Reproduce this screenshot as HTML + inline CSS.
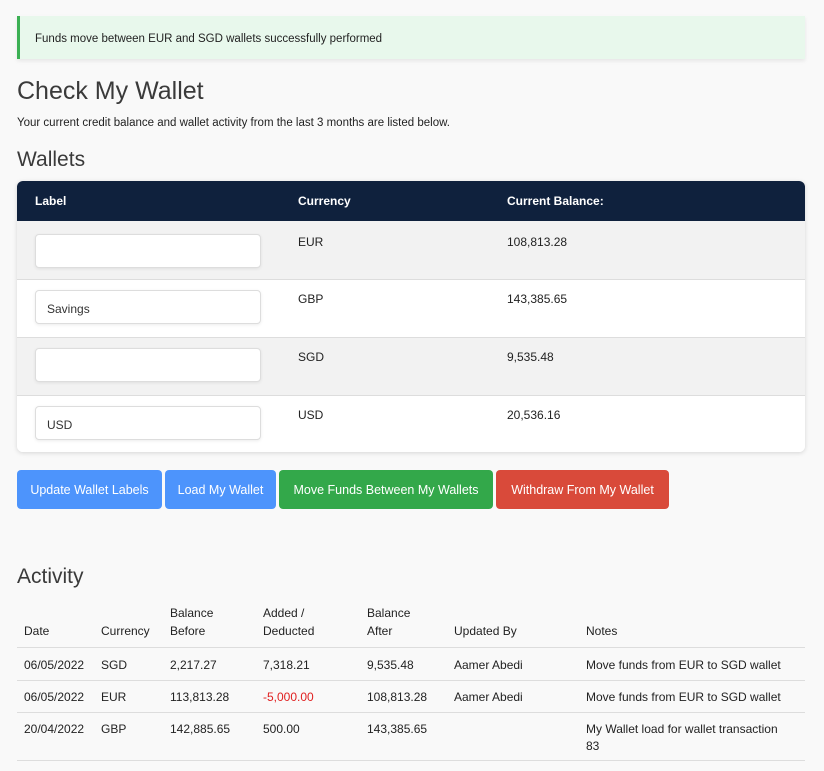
<!DOCTYPE html>
<html><head><meta charset="utf-8"><style>
*{margin:0;padding:0;box-sizing:border-box}
body{width:824px;height:771px;background:#f9f9f9;font-family:"Liberation Sans",sans-serif;color:#222;position:relative;overflow:hidden}
.a{position:absolute;white-space:nowrap}
.alert{left:17px;top:16px;width:788px;height:43px;background:#e8f8ec;border-left:3px solid #3cb054;box-shadow:0 2px 4px rgba(0,0,0,.08)}
.t{font-size:12px;margin-top:1px}
.s{font-size:11.5px}
.h{font-weight:300;color:#3a3a3a}
.card{left:17px;top:181px;width:788px;height:271px;border-radius:6px;overflow:hidden;box-shadow:0 1px 5px rgba(0,0,0,.15);background:#fff}
.thead{position:absolute;left:0;top:0;width:788px;height:40px;background:#0f213d}
.row{position:absolute;left:0;width:788px;border-top:1px solid #ddd}
.inp{position:absolute;left:18px;width:226px;height:34px;background:#fff;border:1px solid #ddd;border-radius:4px;box-shadow:0 1px 3px rgba(0,0,0,.08);font-size:12px;padding:11px 11px;color:#333}
.btn{top:470px;height:39px;border-radius:4px;color:#fff;font-size:12.5px;text-align:center;line-height:40px}
.line{position:absolute;left:17px;width:788px;height:1px;background:#ddd}
</style></head><body>
<div class="a alert"></div>
<div class="a t" style="left:35px;top:32px;font-size:11.5px">Funds move between EUR and SGD wallets successfully performed</div>
<div class="a h" style="left:17px;top:77px;font-size:25px">Check My Wallet</div>
<div class="a s" style="left:17px;top:117px">Your current credit balance and wallet activity from the last 3 months are listed below.</div>
<div class="a h" style="left:17px;top:148px;font-size:21px">Wallets</div>
<div class="a card">
<div class="thead"></div>
<div class="a t" style="left:18px;top:12px;color:#fff;font-weight:bold">Label</div>
<div class="a t" style="left:281px;top:12px;color:#fff;font-weight:bold">Currency</div>
<div class="a t" style="left:490px;top:12px;color:#fff;font-weight:bold">Current Balance:</div>
<div class="row" style="top:40px;height:58px;background:#f2f2f2;border-top:none"></div>
<div class="row" style="top:98px;height:58px;background:#fff"></div>
<div class="row" style="top:156px;height:58px;background:#f2f2f2"></div>
<div class="row" style="top:214px;height:57px;background:#fff"></div>
<div class="inp" style="top:53px"></div>
<div class="inp" style="top:109px">Savings</div>
<div class="inp" style="top:167px"></div>
<div class="inp" style="top:225px">USD</div>
<div class="a t" style="left:281px;top:53px">EUR</div><div class="a t" style="left:490px;top:53px">108,813.28</div>
<div class="a t" style="left:281px;top:110px">GBP</div><div class="a t" style="left:490px;top:110px">143,385.65</div>
<div class="a t" style="left:281px;top:168px">SGD</div><div class="a t" style="left:490px;top:168px">9,535.48</div>
<div class="a t" style="left:281px;top:226px">USD</div><div class="a t" style="left:490px;top:226px">20,536.16</div>
</div>
<div class="a btn" style="left:17px;width:145px;background:#4d94fc">Update Wallet Labels</div>
<div class="a btn" style="left:165px;width:111px;background:#4d94fc">Load My Wallet</div>
<div class="a btn" style="left:279px;width:214px;background:#33a84a">Move Funds Between My Wallets</div>
<div class="a btn" style="left:496px;width:173px;background:#d94a3a">Withdraw From My Wallet</div>
<div class="a h" style="left:17px;top:565px;font-size:21px">Activity</div>
<div class="a t" style="left:170px;top:605px">Balance</div>
<div class="a t" style="left:263px;top:605px">Added /</div>
<div class="a t" style="left:367px;top:605px">Balance</div>
<div class="a t" style="left:24px;top:623px">Date</div>
<div class="a t" style="left:101px;top:623px">Currency</div>
<div class="a t" style="left:170px;top:623px">Before</div>
<div class="a t" style="left:263px;top:623px">Deducted</div>
<div class="a t" style="left:367px;top:623px">After</div>
<div class="a t" style="left:454px;top:623px">Updated By</div>
<div class="a t" style="left:586px;top:623px">Notes</div>
<div class="line" style="top:647px"></div>
<div class="line" style="top:680px"></div>
<div class="line" style="top:712px"></div>
<div class="line" style="top:760px"></div>
<div class="a t" style="left:24px;top:657px">06/05/2022</div><div class="a t" style="left:101px;top:657px">SGD</div><div class="a t" style="left:170px;top:657px">2,217.27</div><div class="a t" style="left:263px;top:657px">7,318.21</div><div class="a t" style="left:367px;top:657px">9,535.48</div><div class="a t" style="left:454px;top:657px">Aamer Abedi</div><div class="a t" style="left:586px;top:657px">Move funds from EUR to SGD wallet</div>
<div class="a t" style="left:24px;top:689px">06/05/2022</div><div class="a t" style="left:101px;top:689px">EUR</div><div class="a t" style="left:170px;top:689px">113,813.28</div><div class="a t" style="left:263px;top:689px;color:#e02020">-5,000.00</div><div class="a t" style="left:367px;top:689px">108,813.28</div><div class="a t" style="left:454px;top:689px">Aamer Abedi</div><div class="a t" style="left:586px;top:689px">Move funds from EUR to SGD wallet</div>
<div class="a t" style="left:24px;top:721px">20/04/2022</div><div class="a t" style="left:101px;top:721px">GBP</div><div class="a t" style="left:170px;top:721px">142,885.65</div><div class="a t" style="left:263px;top:721px">500.00</div><div class="a t" style="left:367px;top:721px">143,385.65</div><div class="a t" style="left:586px;top:721px">My Wallet load for wallet transaction</div><div class="a t" style="left:586px;top:738px">83</div>
</body></html>
